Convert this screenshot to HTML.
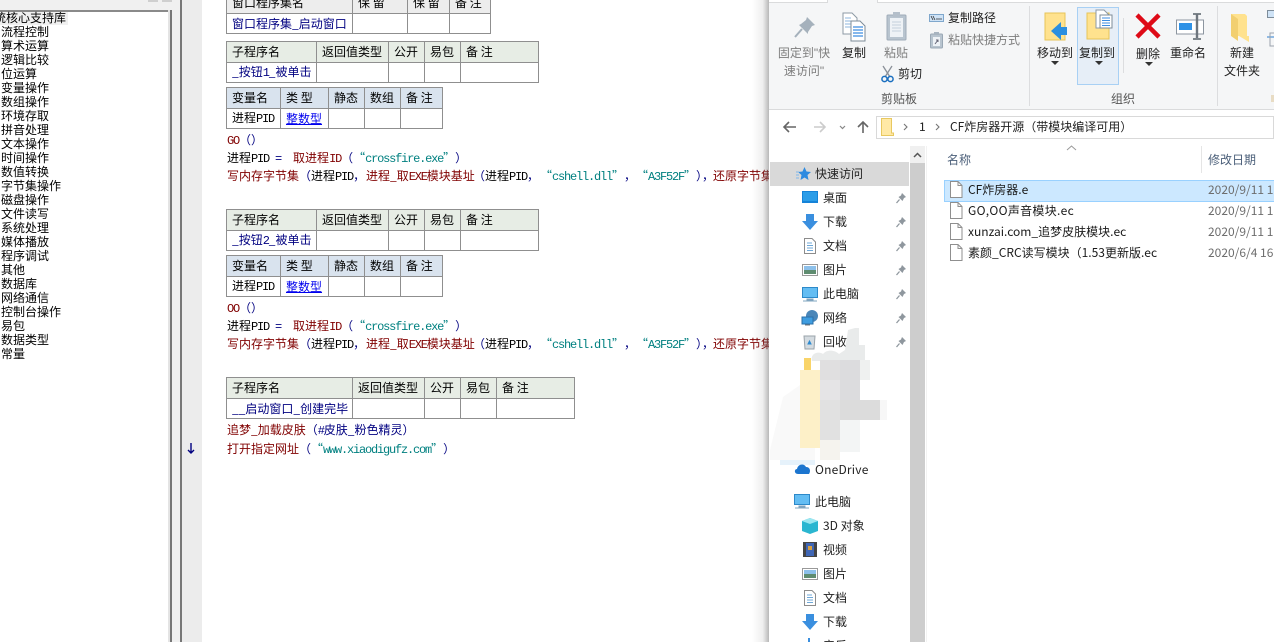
<!DOCTYPE html>
<html><head><meta charset="utf-8">
<style>
html,body{margin:0;padding:0;width:1274px;height:642px;overflow:hidden;background:#fff}
*{box-sizing:border-box}
.a{position:absolute}
#root{position:relative;width:1274px;height:642px;overflow:hidden;font-family:"WenQuanYi Zen Hei","Noto Sans CJK SC",sans-serif;font-size:12px;color:#000}
.list div{height:14px;line-height:14px;white-space:nowrap}
table{position:absolute;border-collapse:collapse;table-layout:fixed;left:226px}
td{border:1px solid #8f8f8f;padding:0 0 0 5px;height:20px;line-height:18px;white-space:nowrap;overflow:hidden;font-size:12px}
tr.h td{height:21px}
.g td{background:#e7ede5}.v td{background:#d9e3ee}.e td{background:#ededed}
.n{color:#000080}.b{color:#0000ee;text-decoration:underline}
.c{position:absolute;left:227px;height:18px;line-height:18px;white-space:nowrap;width:542px;overflow:hidden}
.c span.p{position:absolute;top:0}
i{font-style:normal;font-family:"Liberation Mono",monospace;font-size:12px;letter-spacing:-1.2px;white-space:pre}
b{font-weight:normal;display:inline-block;width:12px;text-align:center}
.r{color:#800000}.u{color:#000080}.s{color:#008080}
.u{font-family:"Noto Sans CJK SC",sans-serif}
.w{color:#000080}
.x{font-family:"Noto Sans CJK SC","Liberation Sans",sans-serif;position:absolute;white-space:nowrap;line-height:16px;font-size:12px;color:#222}
.m{transform:translateX(-50%)}
.gr{color:#7d7d7d}
.f{color:#1a1a1a}
.d{color:#6d6d6d;left:1208px}
.q{font-family:"Liberation Sans",sans-serif}
svg{position:absolute;overflow:visible}
</style></head><body>
<div id="root">
<!-- left panel -->
<div class="a" style="left:0;top:0;width:182px;height:642px;background:#f0f0f0"></div>
<div class="a" style="left:148px;top:0;width:10px;height:2px;background:#cfcfcf"></div>
<div class="a" style="left:162px;top:0;width:10px;height:2px;background:#cfcfcf"></div>
<div class="a" style="left:0;top:10px;width:168px;height:632px;background:#fff;border-top:2px solid #8a8a8a"></div>
<div class="a" style="left:168px;top:10px;width:2px;height:632px;background:#e4e4e4"></div>
<div class="a" style="left:170px;top:10px;width:2px;height:632px;background:#777"></div>
<div class="a" style="left:180px;top:0;width:2px;height:642px;background:#777"></div>
<div class="a" style="left:182px;top:0;width:20px;height:642px;background:#ececec"></div>
<div class="a" style="left:0;top:12px;width:68px;height:13px;background:#f0f0f0"></div>
<div class="a list" style="left:1px;top:11px;width:167px;overflow:visible">
<div style="margin-left:-19px">系统核心支持库</div><div>流程控制</div><div>算术运算</div><div>逻辑比较</div><div>位运算</div><div>变量操作</div><div>数组操作</div><div>环境存取</div><div>拼音处理</div><div>文本操作</div><div>时间操作</div><div>数值转换</div><div>字节集操作</div><div>磁盘操作</div><div>文件读写</div><div>系统处理</div><div>媒体播放</div><div>程序调试</div><div>其他</div><div>数据库</div><div>网络通信</div><div>控制台操作</div><div>易包</div><div>数据类型</div><div>常量</div>
</div>
<!-- tables -->
<table style="top:-8px;width:264px"><colgroup><col style="width:126px"><col style="width:55px"><col style="width:42px"><col style="width:41px"></colgroup>
<tr class="h e"><td>窗口程序集名</td><td>保 留</td><td>保 留</td><td>备 注</td></tr><tr><td class="n">窗口程序集_启动窗口</td><td></td><td></td><td></td></tr></table>

<table style="top:41px;width:312px"><colgroup><col style="width:90px"><col style="width:72px"><col style="width:36px"><col style="width:36px"><col style="width:78px"></colgroup>
<tr class="h g"><td>子程序名</td><td>返回值类型</td><td>公开</td><td>易包</td><td>备 注</td></tr><tr><td class="n">_按钮<i>1</i>_被单击</td><td></td><td></td><td></td><td></td></tr></table>
<table style="top:87px;width:216px"><colgroup><col style="width:54px"><col style="width:48px"><col style="width:36px"><col style="width:36px"><col style="width:42px"></colgroup>
<tr class="h v"><td>变量名</td><td>类 型</td><td>静态</td><td>数组</td><td>备 注</td></tr><tr><td>进程<i>PID</i></td><td><span class="b">整数型</span></td><td></td><td></td><td></td></tr></table>
<div class="c" style="top:131px"><span class="r"><i>GO</i></span><span class="u">（）</span></div>
<div class="c" style="top:149px">进程<i>PID</i><i class="w"> =  </i><span class="r">取进程<i>ID</i></span><span class="u">（</span><span class="s"><b>“</b><i>crossfire.exe</i><b>”</b></span><span class="u">）</span></div>
<div class="c" style="top:167px"><span class="r">写内存字节集</span><span class="u">（</span>进程<i>PID</i><span class="u">，</span><span class="p r" style="left:139px">进程_取<i>EXE</i>模块基址</span><span class="p u" style="left:246px">（</span><span class="p" style="left:258px">进程<i>PID</i></span><span class="p u" style="left:300px">，</span><span class="p s" style="left:313px"><b>“</b><i>cshell.dll</i><b>”</b></span><span class="p u" style="left:397px">，</span><span class="p s" style="left:409px"><b>“</b><i>A3F52F</i><b>”</b></span><span class="p u" style="left:469px">）</span><span class="p u" style="left:475px">，</span><span class="p r" style="left:486px">还原字节集</span></div>

<table style="top:209px;width:312px"><colgroup><col style="width:90px"><col style="width:72px"><col style="width:36px"><col style="width:36px"><col style="width:78px"></colgroup>
<tr class="h g"><td>子程序名</td><td>返回值类型</td><td>公开</td><td>易包</td><td>备 注</td></tr><tr><td class="n">_按钮<i>2</i>_被单击</td><td></td><td></td><td></td><td></td></tr></table>
<table style="top:255px;width:216px"><colgroup><col style="width:54px"><col style="width:48px"><col style="width:36px"><col style="width:36px"><col style="width:42px"></colgroup>
<tr class="h v"><td>变量名</td><td>类 型</td><td>静态</td><td>数组</td><td>备 注</td></tr><tr><td>进程<i>PID</i></td><td><span class="b">整数型</span></td><td></td><td></td><td></td></tr></table>
<div class="c" style="top:299px"><span class="r"><i>OO</i></span><span class="u">（）</span></div>
<div class="c" style="top:317px">进程<i>PID</i><i class="w"> =  </i><span class="r">取进程<i>ID</i></span><span class="u">（</span><span class="s"><b>“</b><i>crossfire.exe</i><b>”</b></span><span class="u">）</span></div>
<div class="c" style="top:335px"><span class="r">写内存字节集</span><span class="u">（</span>进程<i>PID</i><span class="u">，</span><span class="p r" style="left:139px">进程_取<i>EXE</i>模块基址</span><span class="p u" style="left:246px">（</span><span class="p" style="left:258px">进程<i>PID</i></span><span class="p u" style="left:300px">，</span><span class="p s" style="left:313px"><b>“</b><i>cshell.dll</i><b>”</b></span><span class="p u" style="left:397px">，</span><span class="p s" style="left:409px"><b>“</b><i>A3F52F</i><b>”</b></span><span class="p u" style="left:469px">）</span><span class="p u" style="left:475px">，</span><span class="p r" style="left:486px">还原字节集</span></div>

<table style="top:377px;width:348px"><colgroup><col style="width:126px"><col style="width:72px"><col style="width:36px"><col style="width:36px"><col style="width:78px"></colgroup>
<tr class="h g"><td>子程序名</td><td>返回值类型</td><td>公开</td><td>易包</td><td>备 注</td></tr><tr><td class="n">__启动窗口_创建完毕</td><td></td><td></td><td></td><td></td></tr></table>
<div class="c" style="top:421px"><span class="r">追梦_加载皮肤</span><span class="u">（</span><span class="w"><i>#</i>皮肤_粉色精灵</span><span class="u">）</span></div>
<div class="c" style="top:440px"><span class="r">打开指定网址</span><span class="u">（</span><span class="s"><b>“</b><i>www.xiaodigufz.com</i><b>”</b></span><span class="u">）</span></div>
<svg style="left:186px;top:443px" width="10" height="12"><path d="M5 0V10M2 7L5 10L8 7" stroke="#000080" stroke-width="1.4" fill="none"/></svg>

<!-- window shadow -->
<div class="a" style="left:752px;top:0;width:18px;height:642px;background:linear-gradient(90deg,rgba(120,120,120,0),rgba(120,120,120,.12) 60%,rgba(110,110,110,.55))"></div>
<!-- explorer -->
<div class="a" style="left:769px;top:0;width:505px;height:642px;background:#fff"></div>
<div class="a" style="left:769px;top:2px;width:505px;height:108px;background:#f5f6f7;border-top:1px solid #dadbdc;border-bottom:1px solid #dadbdc"></div>
<div class="a" style="left:827px;top:0;width:51px;height:3px;background:#f5f6f7;border-left:1px solid #dadbdc;border-right:1px solid #dadbdc"></div>

<!-- ribbon icons -->
<svg style="left:793px;top:15px" width="24" height="24"><path d="M14 2L22 10L19 11L15 17L15 19L6 10L8 9L13 5Z" fill="#a5b1bc"/><path d="M9 14L2 22" stroke="#a5b1bc" stroke-width="2"/></svg>
<svg style="left:842px;top:12px" width="26" height="30"><path d="M1 1H10L15 6V22H1Z" fill="#fff" stroke="#8d9aa5"/><path d="M3 6H9M3 9H12M3 12H12M3 15H12" stroke="#8eb4dc"/><path d="M9 9H18L23 14V29H9Z" fill="#fff" stroke="#7d8c99"/><path d="M11 15H21M11 18H21M11 21H21M11 24H21" stroke="#3d8ee0" stroke-width="1.2"/></svg>
<svg style="left:886px;top:11px" width="22" height="30"><rect x="1" y="4" width="19" height="25" rx="1" fill="#b8c4cf" stroke="#a0acb8"/><rect x="4" y="7" width="13" height="19" fill="#eef2f6"/><path d="M6 11H15M6 14H15M6 17H15M6 20H15" stroke="#c4d0dc"/><rect x="7" y="1" width="7" height="5" fill="#b4bfca"/></svg>
<svg style="left:881px;top:65px" width="14" height="18"><path d="M2 1L9 12M11 1L4 12" stroke="#8a9098" stroke-width="1.3"/><circle cx="3.5" cy="14" r="2.6" fill="none" stroke="#1a6fc0" stroke-width="1.5"/><circle cx="9.5" cy="14" r="2.6" fill="none" stroke="#1a6fc0" stroke-width="1.5"/></svg>
<svg style="left:929px;top:14px" width="16" height="9"><rect x=".5" y=".5" width="14" height="7" fill="#cfe3f6" stroke="#7fa7cc"/><path d="M2 2L4 6M4 2L6 6M7 5H13" stroke="#333" stroke-width=".8"/></svg>
<svg style="left:930px;top:32px" width="14" height="17"><rect x=".5" y="2" width="12" height="14" rx="1" fill="#b8c4cf" stroke="#9aa8b5"/><rect x="3" y="5" width="7" height="9" fill="#eef2f6"/><rect x="4" y="0" width="5" height="3" fill="#a8b4c0"/><path d="M5 12L8 8M6 8H8V10" stroke="#667" fill="none"/></svg>

<div class="a" style="left:1029px;top:6px;width:1px;height:100px;background:#dcdddf"></div>
<svg style="left:1045px;top:12px" width="22" height="30"><path d="M0 1H20V28H0Z" fill="#ffe28e" stroke="#e7c458"/><path d="M8 20L18 11V16H24V24H18V29Z" fill="#2b8fe0" transform="translate(-2,-1)"/></svg>
<div class="a" style="left:1077px;top:7px;width:42px;height:78px;background:#e6eef7;border:1px solid #a8d0f4"></div>
<svg style="left:1087px;top:10px" width="26" height="32"><path d="M0 3H22V29H0Z" fill="#ffe28e" stroke="#e7c458"/><path d="M9 0H17L22 5V18H9Z" fill="#fff" stroke="#8d9aa5"/><path d="M13 5H25V18H13Z" fill="#fff" stroke="#7d8c99"/><path d="M15 8H23M15 10.5H23M15 13H23M15 15.5H23" stroke="#3d8ee0"/></svg>
<div class="a" style="left:1123px;top:18px;width:1px;height:55px;background:#dcdddf"></div>
<svg style="left:1135px;top:13px" width="26" height="26"><path d="M2 2L24 24M24 2L2 24" stroke="#de0a17" stroke-width="4.5"/></svg>
<svg style="left:1176px;top:12px" width="28" height="28"><rect x=".5" y="8" width="27" height="14" fill="#fff" stroke="#8d96a0"/><rect x="3" y="11" width="13" height="7" fill="#2f92e6"/><path d="M21 2V26" stroke="#6e767e" stroke-width="2.4"/><path d="M17 2H25M17 27H25" stroke="#6e767e" stroke-width="1.8"/></svg>
<div class="a" style="left:1217px;top:6px;width:1px;height:100px;background:#dcdddf"></div>
<svg style="left:1231px;top:14px" width="22" height="28"><path d="M0 0H14L16 2V22H18V28L8 22H0Z" fill="#ffe28e"/><path d="M0 0V22L7 27V5Z" fill="#f2cf70"/></svg>
<svg style="left:1267px;top:10px" width="7" height="38"><rect x=".5" y=".5" width="8" height="7" fill="#cfe3f6" stroke="#7d8c99"/><path d="M0 27H8M3 24V30" stroke="#2b7fd0"/><rect x="3" y="23" width="6" height="13" fill="none" stroke="#9aa3ac"/></svg>
<svg style="left:1051px;top:61px" width="8" height="5"><path d="M0 0H8L4 4Z" fill="#333"/></svg>
<svg style="left:1095px;top:61px" width="8" height="5"><path d="M0 0H8L4 4Z" fill="#333"/></svg>
<svg style="left:1145px;top:62px" width="8" height="5"><path d="M0 0H8L4 4Z" fill="#333"/></svg>

<div class="x m gr" style="left:804px;top:45px">固定到<span class="q">"</span>快</div>
<div class="x m gr" style="left:804px;top:63px">速访问<span class="q">"</span></div>
<div class="x m" style="left:854px;top:45px">复制</div>
<div class="x m gr" style="left:896px;top:45px">粘贴</div>
<div class="x" style="left:898px;top:66px">剪切</div>
<div class="x" style="left:948px;top:10px">复制路径</div>
<div class="x gr" style="left:948px;top:32px">粘贴快捷方式</div>
<div class="x m" style="left:899px;top:91px;color:#555">剪贴板</div>
<div class="x m" style="left:1055px;top:45px">移动到</div>
<div class="x m" style="left:1097px;top:45px">复制到</div>
<div class="x m" style="left:1148px;top:46px">删除</div>
<div class="x m" style="left:1188px;top:45px">重命名</div>
<div class="x m" style="left:1123px;top:91px;color:#555">组织</div>
<div class="x m" style="left:1242px;top:45px">新建</div>
<div class="x m" style="left:1242px;top:63px">文件夹</div>
<div class="a" style="left:1271px;top:95px;width:3px;height:7px;background:#e8dcc4"></div>

<!-- address bar -->
<svg style="left:782px;top:120px" width="90" height="14"><path d="M2 7H14M7 2L2 7L7 12" stroke="#666" stroke-width="1.6" fill="none"/><path d="M32 7H43M38 2L43 7L38 12" stroke="#ccc" stroke-width="1.6" fill="none"/><path d="M58 6L60.5 8.5L63 6" stroke="#888" stroke-width="1.2" fill="none"/><path d="M81 13V2M76 7L81 2L86 7" stroke="#666" stroke-width="1.6" fill="none"/></svg>
<div class="a" style="left:876px;top:116px;width:398px;height:23px;border:1px solid #d9d9d9;background:#fff"></div>
<svg style="left:881px;top:118px" width="13" height="18"><path d="M.5 .5H10.5V15H12.5V17.5H.5Z" fill="#ffe9a6" stroke="#e8c860"/></svg>
<svg style="left:903px;top:123px" width="40" height="9"><path d="M1 1L4 4L1 7M33 1L36 4L33 7" stroke="#777" stroke-width="1.1" fill="none"/></svg>
<div class="x" style="left:919px;top:119px">1</div>
<div class="x" style="left:950px;top:119px">CF炸房器开源（带模块编译可用）</div>

<!-- nav -->
<div class="a" style="left:770px;top:162px;width:139px;height:24px;background:#d9d9d9"></div>
<div class="a" style="left:910px;top:146px;width:15px;height:17px;background:#f0f0f0"></div>
<div class="a" style="left:910px;top:163px;width:15px;height:479px;background:#cdcdcd"></div>
<svg style="left:913px;top:152px" width="9" height="6"><path d="M1 5L4.5 1.5L8 5" stroke="#555" stroke-width="1.5" fill="none"/></svg>
<div class="a" style="left:926px;top:146px;width:1px;height:496px;background:#f2f2f2"></div>

<svg style="left:796px;top:167px" width="15" height="13"><path d="M8.5 0L10.5 4.5L15 5L11.5 8L12.5 13L8.5 10.5L4.5 13L5.5 8L2 5L6.5 4.5Z" fill="#2e8be0"/><path d="M0 5H3M0 8H3M0 11H3" stroke="#7fb8ea"/></svg>
<svg style="left:802px;top:191px" width="17" height="13"><rect width="16" height="12" fill="#1583d8"/><rect x="1" y="1" width="14" height="9" fill="#2b9de8"/></svg>
<svg style="left:802px;top:214px" width="16" height="16"><path d="M4 0H12V7H16L8 16L0 7H4Z" fill="#3a8fdf"/></svg>
<svg style="left:804px;top:238px" width="12" height="16"><path d="M.5 .5H8L11.5 4V15.5H.5Z" fill="#fff" stroke="#8c8c8c"/><path d="M3 5H8M3 7.5H9M3 10H9M3 12.5H9" stroke="#6fa8d8"/></svg>
<svg style="left:802px;top:264px" width="16" height="12"><rect x=".5" y=".5" width="15" height="11" fill="#fff" stroke="#999"/><rect x="2" y="2" width="12" height="4" fill="#8cc0ea"/><rect x="2" y="6" width="12" height="4" fill="#5f8c70"/></svg>
<svg style="left:802px;top:287px" width="16" height="15"><rect x=".5" y=".5" width="15" height="10" fill="#63bdf3" stroke="#2d89c9"/><path d="M5 12H11V13H5ZM1 14H15" stroke="#7fa4bf"/></svg>
<svg style="left:802px;top:310px" width="16" height="16"><circle cx="10" cy="6" r="6" fill="#4a86b8"/><rect x="0" y="7" width="11" height="7" fill="#3f9de0" stroke="#2a6fa8"/><path d="M3 15H8" stroke="#777"/></svg>
<svg style="left:803px;top:334px" width="13" height="16"><path d="M1 2H12L11 15H2Z" fill="#d4dbe0" stroke="#9aa3aa"/><path d="M5 10L6.5 7L8 10Z" fill="#2d8ad0" stroke="#2d8ad0"/></svg>
<div class="x" style="left:815px;top:166px">快速访问</div>
<div class="x" style="left:823px;top:190px">桌面</div>
<div class="x" style="left:823px;top:214px">下载</div>
<div class="x" style="left:823px;top:238px">文档</div>
<div class="x" style="left:823px;top:262px">图片</div>
<div class="x" style="left:823px;top:286px">此电脑</div>
<div class="x" style="left:823px;top:310px">网络</div>
<div class="x" style="left:823px;top:334px">回收站</div>
<svg style="left:896px;top:193px" width="11" height="160" fill="#8f979e"><g id="p"><path d="M6 0L10 4L8 5L6.5 8L2.5 4L5 2.5Z"/><path d="M3.5 6.5L.5 10" stroke="#8f979e" stroke-width="1.3"/></g><use href="#p" y="24"/><use href="#p" y="48"/><use href="#p" y="72"/><use href="#p" y="96"/><use href="#p" y="120"/><use href="#p" y="144"/></svg>

<!-- blurred blob -->
<svg style="left:755px;top:325px" width="150" height="150">
<path d="M15 125L28 72L45 60V135H15Z M45 60H60V140H45Z" fill="#f9f9f9"/>
<path d="M57 36C55 28 64 26 68 29C72 24 80 25 84 29L90 25L93 5L100 3H104V20H110V36Z" fill="#e9ebeb"/>
<rect x="49" y="33" width="7" height="13" fill="#f9d469"/>
<rect x="49" y="105" width="7" height="16" fill="#f9d469"/>
<rect x="45" y="45" width="20" height="78" fill="#fdf0c8"/>
<rect x="65" y="35" width="20" height="40" fill="#e0dfe0"/>
<rect x="65" y="55" width="20" height="20" fill="#e5e4e6"/>
<rect x="85" y="35" width="20" height="40" fill="#dcdcde"/>
<rect x="105" y="35" width="10" height="20" fill="#eff1f0"/>
<rect x="65" y="75" width="20" height="40" fill="#e1e1e1"/>
<rect x="85" y="75" width="40" height="20" fill="#dcdcdc"/>
<rect x="125" y="75" width="7" height="20" fill="#f7f7f7"/>
<rect x="85" y="95" width="20" height="32" fill="#f3f5f5"/>
<rect x="65" y="115" width="20" height="20" fill="#f5f3ee"/>
<rect x="25" y="135" width="35" height="5" fill="#e6f2fb"/>
</svg>

<svg style="left:794px;top:463px" width="17" height="12"><path d="M4 11C0 11 0 6 3 6C4 1 10 0 12 4C16 4 17 8 15 11Z" fill="#1b75cf"/></svg>
<div class="x" style="left:815px;top:462px;letter-spacing:.2px">OneDrive</div>
<svg style="left:794px;top:494px" width="16" height="15"><rect x=".5" y=".5" width="15" height="10" fill="#63bdf3" stroke="#2d89c9"/><path d="M5 12H11V13H5ZM1 14H15" stroke="#7fa4bf"/></svg>
<div class="x" style="left:815px;top:494px">此电脑</div>
<svg style="left:802px;top:518px" width="16" height="16"><path d="M8 0L16 3V13L8 16L0 13V3Z" fill="#2bb6d0"/><path d="M0 3L8 6L16 3L8 0Z" fill="#9ce7f0"/></svg>
<div class="x" style="left:823px;top:518px">3D 对象</div>
<svg style="left:803px;top:542px" width="14" height="15"><rect width="14" height="15" fill="#444"/><rect x="3" y="1" width="8" height="13" fill="#3f66b5"/><rect x="5" y="4" width="4" height="4" fill="#d8a040"/></svg>
<div class="x" style="left:823px;top:542px">视频</div>
<svg style="left:802px;top:568px" width="16" height="12"><rect x=".5" y=".5" width="15" height="11" fill="#fff" stroke="#999"/><rect x="2" y="2" width="12" height="4" fill="#8cc0ea"/><rect x="2" y="6" width="12" height="4" fill="#5f8c70"/></svg>
<div class="x" style="left:823px;top:566px">图片</div>
<svg style="left:804px;top:590px" width="12" height="16"><path d="M.5 .5H8L11.5 4V15.5H.5Z" fill="#fff" stroke="#8c8c8c"/><path d="M3 5H8M3 7.5H9M3 10H9M3 12.5H9" stroke="#6fa8d8"/></svg>
<div class="x" style="left:823px;top:590px">文档</div>
<svg style="left:802px;top:614px" width="16" height="16"><path d="M4 0H12V7H16L8 16L0 7H4Z" fill="#3a8fdf"/></svg>
<div class="x" style="left:823px;top:614px">下载</div>
<svg style="left:805px;top:638px" width="10" height="5"><path d="M3 0H5V5H3Z" fill="#3a8fdf"/></svg>
<div class="x" style="left:823px;top:638px">音乐</div>

<!-- files -->
<svg style="left:1066px;top:145px" width="11" height="6"><path d="M1 5L5.5 1L10 5" stroke="#999" fill="none"/></svg>
<div class="x" style="left:947px;top:152px;color:#4c607a">名称</div>
<div class="a" style="left:1201px;top:146px;width:1px;height:27px;background:#e5e5e5"></div>
<div class="x" style="left:1208px;top:152px;color:#4c607a">修改日期</div>
<div class="a" style="left:944px;top:180px;width:330px;height:22px;background:#cce8ff;border:1px solid #99d1ff;border-right:none"></div>
<svg style="left:950px;top:181px" width="13" height="80" fill="#fff" stroke="#8f8f8f"><g id="fi"><path d="M.5 .5H8L12 4.5V16.5H.5Z"/><path d="M8 .5V4.5H12" fill="none"/></g><use href="#fi" y="21"/><use href="#fi" y="42"/><use href="#fi" y="63"/></svg>
<div class="x f" style="left:968px;top:182px">CF炸房器.e</div>
<div class="x f" style="left:968px;top:203px;letter-spacing:.3px">GO,OO声音模块.ec</div>
<div class="x f" style="left:968px;top:224px">xunzai.com_追梦皮肤模块.ec</div>
<div class="x f" style="left:968px;top:245px">素颜_CRC读写模块（1.53更新版.ec</div>
<div class="x d" style="top:182px">2020/9/11 1</div>
<div class="x d" style="top:203px">2020/9/11 1</div>
<div class="x d" style="top:224px">2020/9/11 1</div>
<div class="x d" style="top:245px">2020/6/4 16</div>
</div>
</body></html>
